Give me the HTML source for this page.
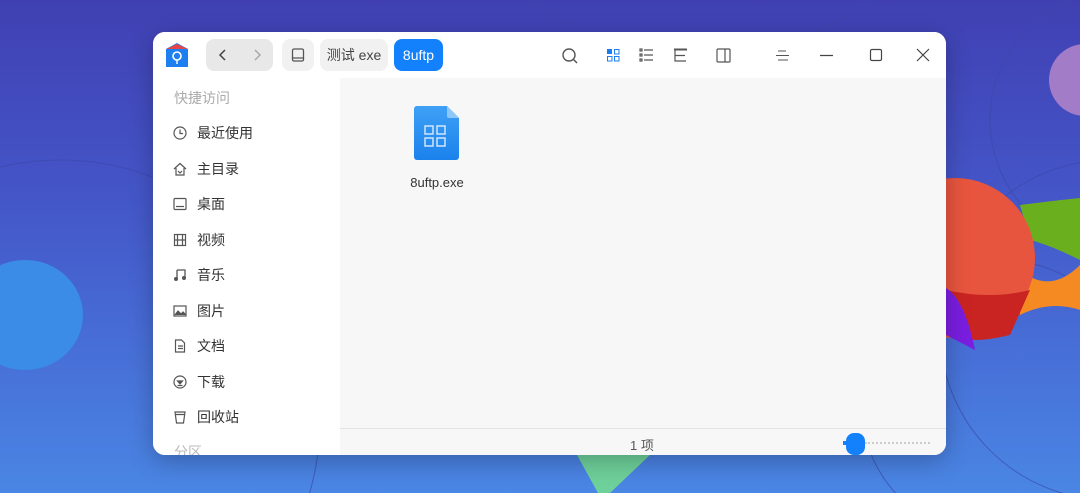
<!DOCTYPE html>
<html><head><meta charset="utf-8"><style>
*{margin:0;padding:0;box-sizing:border-box}
html,body{width:1080px;height:493px;overflow:hidden}
body{position:relative;font-family:"Liberation Sans","Noto Sans CJK SC",sans-serif;background:linear-gradient(180deg,#4040b2 0%,#4456c8 40%,#4a86e4 100%)}
.bg{position:absolute;left:0;top:0}
.win{position:absolute;left:153px;top:32px;width:793px;height:423px;border-radius:12px;background:#fff;overflow:hidden;box-shadow:0 6px 24px rgba(0,0,0,.25)}
.hdr{position:absolute;left:0;top:0;width:793px;height:46px;background:#fff}
.side{position:absolute;left:0;top:46px;width:187px;height:377px;background:#fff;overflow:hidden}
.main{position:absolute;left:187px;top:46px;width:606px;height:377px;background:#f7f7f7}
.status{position:absolute;left:187px;top:396px;width:606px;height:27px;border-top:1px solid #e3e3e3;background:#f7f7f7}
.it{position:absolute;left:0;height:20px;font-size:14px;color:#333;line-height:20px}
.it svg{position:absolute;left:20px;top:3px}
.it span{position:absolute;left:44px;white-space:nowrap}
.btn{position:absolute;top:7px;height:32px;border-radius:8px;background:#f1f1f1;font-size:14px;line-height:32px;color:#444;text-align:center}
svg.i{position:absolute}
</style></head><body>
<svg class="bg" width="1080" height="493">
<g fill="none" stroke="#3a4aa8" stroke-width="1" opacity=".7">
<circle cx="1120" cy="120" r="130"/><circle cx="1110" cy="330" r="170"/><circle cx="1000" cy="400" r="140"/><circle cx="60" cy="420" r="260"/><circle cx="700" cy="-200" r="260"/>
</g>
<circle cx="1085" cy="80" r="36" fill="#a37cc8"/>
<path d="M1020 205 Q1060 200 1080 198 L1080 260 Q1050 245 1030 240 Z" fill="#6ab01e"/>
<path d="M1020 270 Q1050 295 1080 265 L1080 310 Q1050 300 1020 315 Z" fill="#f58a22"/>
<circle cx="955" cy="258" r="80" fill="#e8553e"/>
<path d="M946 290 Q990 300 1030 290 L1010 335 Q970 345 946 335 Z" fill="#c92422"/>
<path d="M946 288 Q965 300 975 350 L946 335 Z" fill="#7a1ee0"/>
<ellipse cx="25" cy="315" rx="58" ry="55" fill="#3a8ce6"/>
<path d="M577 455 L650 455 L610 493 L598 493 Z" fill="#6ed09a"/>
</svg>
<div class="win">
<div class="hdr">
<svg class="i" style="left:12px;top:10px" width="24" height="26" viewBox="0 0 24 26"><path d="M1 7 L12 1 L23 7 L23 25 L1 25Z" fill="#1d7ff0"/><path d="M1 7 L12 2 L23 7Z" fill="#e0464a"/><circle cx="12" cy="14" r="4" fill="none" stroke="#fff" stroke-width="1.6"/><path d="M12 18v4" stroke="#fff" stroke-width="1.4"/></svg>
<div class="btn" style="left:53px;width:67px;background:#e8e8e8"></div>
<svg class="i" style="left:63px;top:16px" width="14" height="14"><path d="M9 2L4 7L9 12" fill="none" stroke="#444" stroke-width="1.5"/></svg>
<svg class="i" style="left:97px;top:16px" width="14" height="14"><path d="M5 2L10 7L5 12" fill="none" stroke="#aaa" stroke-width="1.5"/></svg>
<div class="btn" style="left:129px;width:32px"></div>
<svg class="i" style="left:138px;top:16px" width="14" height="14"><rect x="1.5" y="1" width="11" height="12" rx="1.5" fill="none" stroke="#555" stroke-width="1.3"/><path d="M1.5 10h11" stroke="#555" stroke-width="1.3"/></svg>
<div class="btn" style="left:167px;width:68px">测试 exe</div>
<div class="btn" style="left:241px;width:49px;background:#1381fb;color:#fff">8uftp</div>
<svg class="i" style="left:408px;top:15px" width="18" height="18"><circle cx="8" cy="8" r="6" fill="none" stroke="#555" stroke-width="1.4"/><path d="M12.5 12.5L16 16" stroke="#555" stroke-width="1.5"/></svg>
<svg class="i" style="left:453px;top:16px" width="15" height="15"><rect x="1" y="1" width="5" height="5" fill="#1a7ef0"/><rect x="8.5" y="1.5" width="4.5" height="4.5" fill="none" stroke="#1a7ef0"/><rect x="1.5" y="8.5" width="4.5" height="4.5" fill="none" stroke="#1a7ef0"/><rect x="8.5" y="8.5" width="4.5" height="4.5" fill="none" stroke="#1a7ef0"/></svg>
<svg class="i" style="left:486px;top:16px" width="15" height="15" stroke="#555" stroke-width="1.2" fill="none"><rect x="1" y="1" width="2" height="2"/><rect x="1" y="6" width="2" height="2"/><rect x="1" y="11" width="2" height="2"/><path d="M5 2h9M5 7h9M5 12h9"/></svg>
<svg class="i" style="left:520px;top:16px" width="15" height="15" stroke="#555" stroke-width="1.2" fill="none"><path d="M1 1.5h13" stroke-width="2"/><path d="M2 2v11h11M2 7.5h10"/></svg>
<svg class="i" style="left:563px;top:16px" width="15" height="15" stroke="#555" stroke-width="1.2" fill="none"><rect x="1" y="1" width="13" height="13" rx="1"/><path d="M9 1v13"/></svg>
<svg class="i" style="left:622px;top:16px" width="15" height="15" stroke="#555" stroke-width="1.1"><path d="M3 3h8M1 7.5h13M3 12h10"/></svg>
<svg class="i" style="left:666px;top:16px" width="15" height="15" stroke="#444" stroke-width="1.2"><path d="M1 7.5h13"/></svg>
<svg class="i" style="left:716px;top:16px" width="14" height="14" stroke="#444" stroke-width="1.2" fill="none"><rect x="1.5" y="1.5" width="11" height="11" rx="1.5"/></svg>
<svg class="i" style="left:763px;top:16px" width="14" height="14" stroke="#444" stroke-width="1.2"><path d="M1 1L13 13M13 1L1 13"/></svg>
</div>
<div class="side">
<div class="it" style="top:10px;color:#aaa"><span style="left:21px">快捷访问</span></div>
<div class="it" style="top:45px"><svg width="14" height="14" fill="none" stroke="#555" stroke-width="1.2"><circle cx="7" cy="7" r="6"/><path d="M7 3.5V7.5h3"/></svg><span>最近使用</span></div>
<div class="it" style="top:81px"><svg width="14" height="14" fill="none" stroke="#555" stroke-width="1.2"><path d="M1 7L7 1.5L13 7M3 6v7h8V6"/><path d="M5 9l2 2 2-2" /></svg><span>主目录</span></div>
<div class="it" style="top:116px"><svg width="14" height="14" fill="none" stroke="#555" stroke-width="1.2"><rect x="1" y="1.5" width="12" height="11" rx="1"/><path d="M3 9.5h8"/></svg><span>桌面</span></div>
<div class="it" style="top:152px"><svg width="14" height="14" fill="none" stroke="#555" stroke-width="1.2"><rect x="1.5" y="1.5" width="11" height="11"/><path d="M4.5 1.5v11M9.5 1.5v11M1.5 7h11"/></svg><span>视频</span></div>
<div class="it" style="top:187px"><svg width="14" height="14" fill="#555"><path d="M4 2h8v8" fill="none" stroke="#555" stroke-width="1.3"/><circle cx="3" cy="11" r="2"/><circle cx="11" cy="10" r="2"/><path d="M4 2v9" stroke="#555" stroke-width="1.3"/></svg><span>音乐</span></div>
<div class="it" style="top:223px"><svg width="14" height="14" fill="none" stroke="#555" stroke-width="1.2"><rect x="1" y="2" width="12" height="10"/><path d="M2 11l3-4 3 3 2-2 3 3" fill="#555"/></svg><span>图片</span></div>
<div class="it" style="top:258px"><svg width="14" height="14" fill="none" stroke="#555" stroke-width="1.2"><path d="M2.5 1h6l3 3v9h-9z M5 7h5M5 9.5h5"/></svg><span>文档</span></div>
<div class="it" style="top:294px"><svg width="14" height="14" fill="none" stroke="#555" stroke-width="1.2"><circle cx="7" cy="7" r="6"/><path d="M4.5 6l2.5 3 2.5-3z" fill="#555"/><path d="M4.5 10.5h5"/></svg><span>下载</span></div>
<div class="it" style="top:329px"><svg width="14" height="14" fill="none" stroke="#555" stroke-width="1.2"><path d="M2 2h10l-1.5 11h-7z M2 4.5h10"/></svg><span>回收站</span></div>
<div class="it" style="top:364px;color:#bbb"><span style="left:21px">分区</span></div>
</div>
<div class="main">
<svg class="i" style="left:74px;top:28px" width="46" height="54" viewBox="0 0 46 54"><defs><linearGradient id="g" x1="0" y1="0" x2="0" y2="1"><stop offset="0" stop-color="#3fa0f5"/><stop offset="1" stop-color="#1b82ec"/></linearGradient></defs><path d="M3 0h30l12 12v39a3 3 0 0 1-3 3H3a3 3 0 0 1-3-3V3a3 3 0 0 1 3-3z" fill="url(#g)"/><path d="M33 0v10a2 2 0 0 0 2 2h10z" fill="#8cc8fa"/><g fill="none" stroke="#cfe6fd" stroke-width="1.5"><rect x="11" y="20" width="8" height="8"/><rect x="23" y="20" width="8" height="8"/><rect x="11" y="32" width="8" height="8"/><rect x="23" y="32" width="8" height="8"/></g></svg>
<div style="position:absolute;left:56px;top:97px;width:82px;text-align:center;font-size:13px;color:#333">8uftp.exe</div>
</div>
<div class="status">
<div style="position:absolute;left:290px;top:6px;font-size:13px;color:#555">1 项</div>
<div style="position:absolute;left:525px;top:13px;width:65px;border-top:2px dotted #ccc"></div>
<div style="position:absolute;left:503px;top:12px;width:3px;height:4px;background:#1381fb"></div>
<div style="position:absolute;left:506px;top:4px;width:19px;height:22px;border-radius:8px;background:#1381fb"></div>
</div>
</div>
</body></html>
